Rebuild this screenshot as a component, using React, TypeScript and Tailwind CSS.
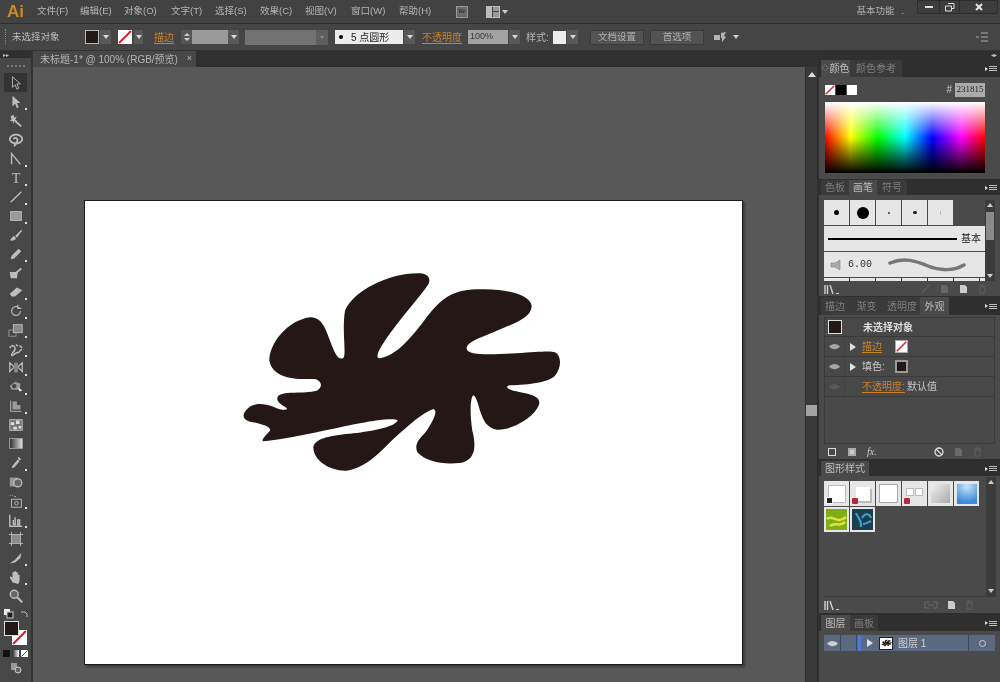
import React from "react";

const FONT = "font-['Liberation_Sans','Noto_Sans_CJK_SC',sans-serif]";

const BLOB = "M345 140C370 80 480 25 570 28C600 30 605 50 590 68C560 110 500 175 455 245C440 270 438 283 450 283C500 275 545 220 590 160C630 110 660 78 740 76C820 72 900 90 905 125C905 160 860 175 790 205C750 222 708 235 710 255C715 275 780 272 860 268C920 264 960 260 975 265C995 275 995 310 975 335C955 355 900 362 840 364C825 366 830 376 850 380C900 390 930 395 928 418C920 455 850 500 800 497C770 490 760 470 750 440C742 410 735 390 728 395C720 410 720 450 727 500C740 550 735 590 690 597C640 602 590 595 562 565C550 535 575 520 590 500C610 470 625 440 610 435C580 445 540 480 490 525C450 565 410 610 350 620C300 622 250 590 250 550C255 520 310 515 370 508C430 500 490 490 503 470C500 462 450 465 390 478C300 495 180 525 100 532C92 530 105 515 120 500C125 490 100 480 60 473C35 465 35 450 55 432C75 415 100 418 130 428C155 440 175 440 170 432C150 420 135 410 145 395C165 380 220 390 260 380C280 370 275 350 255 345C210 345 130 350 118 290C118 240 170 170 240 160C275 160 285 190 300 230C315 270 325 290 340 282C350 270 335 200 345 140Z";

const Ico = ({ children, w = 18, h = 18, vb = "0 0 18 18", cls = "" }: { children: React.ReactNode; w?: number; h?: number; vb?: string; cls?: string }) => (
  <svg width={w} height={h} viewBox={vb} className={`shrink-0 ${cls}`}>{children}</svg>
);

const Drop = ({ w = "w-[11px]", h = "h-[14px]" }: { w?: string; h?: string }) => (
  <div className={`${w} ${h} bg-[#585858] flex items-center justify-center shrink-0`}>
    <div className="w-0 h-0 border-l-[3px] border-r-[3px] border-t-[4px] border-l-transparent border-r-transparent border-t-[#d8d8d8]" />
  </div>
);

const NoneSwatch = ({ cls = "" }: { cls?: string }) => (
  <svg viewBox="0 0 14 14" className={cls}>
    <rect width="14" height="14" fill="#fff" />
    <line x1="1" y1="13" x2="13" y2="1" stroke="#d9202c" strokeWidth="2" />
  </svg>
);

const Tri = () => <div className="w-0 h-0 border-t-[4px] border-b-[4px] border-l-[6px] border-t-transparent border-b-transparent border-l-[#e0e0e0]" />;

const Menu = () => (
  <div className="w-[12px] h-[8px] flex items-center gap-[1px] shrink-0">
    <div className="w-0 h-0 border-t-[2px] border-b-[2px] border-l-[3px] border-t-transparent border-b-transparent border-l-[#ddd]" />
    <div className="flex flex-col gap-[1px] flex-1">
      <div className="h-px bg-[#bbb]" /><div className="h-px bg-[#bbb]" /><div className="h-px bg-[#bbb]" />
    </div>
  </div>
);

const menus: [string, string][] = [
  ["文件(F)", "w-[43px]"], ["编辑(E)", "w-[44px]"], ["对象(O)", "w-[47px]"], ["文字(T)", "w-[44px]"], ["选择(S)", "w-[45px]"],
  ["效果(C)", "w-[45px]"], ["视图(V)", "w-[46px]"], ["窗口(W)", "w-[48px]"], ["帮助(H)", "w-[42px]"],
];

const TitleBar = () => (
  <div className="h-[24px] bg-[#424242] flex items-center shrink-0 border-b border-[#2e2e2e]">
    <span className="ml-[7px] w-[30px] text-[17px] font-bold text-[#c98a24] leading-none">Ai</span>
    {menus.map(([t, w]) => (
      <span key={t} className={`${w} text-[9.5px] text-[#b5b5b5] whitespace-nowrap`}>{t}</span>
    ))}
    <div className="ml-[15px] w-[12px] h-[12px] bg-[#6a6a6a] border border-[#999] text-[6px] text-[#333] flex items-center justify-center font-bold">Br</div>
    <div className="ml-[18px] w-[14px] h-[12px] border border-[#bbb] flex">
      <div className="w-[5px] bg-[#bbb]" />
      <div className="flex-1 flex flex-col gap-px pl-px"><div className="flex-1 bg-[#999]" /><div className="flex-1 bg-[#999]" /></div>
    </div>
    <div className="ml-[2px] w-0 h-0 border-l-[3px] border-r-[3px] border-t-[4px] border-l-transparent border-r-transparent border-t-[#ccc]" />
    <div className="ml-auto flex items-center self-start h-full">
      <span className="text-[9.5px] text-[#b0b0b0] mr-[7px]">基本功能</span>
      <span className="text-[9px] text-[#ccc] mr-[13px]">.</span>
      <div className="flex self-start h-[14px] mr-[2px] bg-[#3d3d3d] border border-[#2c2c2c] rounded-b-[2px]">
        <div className="w-[22px] flex items-center justify-center border-r border-[#2c2c2c]"><div className="w-[8px] h-[2px] bg-[#ddd]" /></div>
        <div className="w-[20px] flex items-center justify-center border-r border-[#2c2c2c]">
          <Ico w={10} h={9} vb="0 0 10 9"><path d="M3 .5h6v5H7M.5 3h6v5h-6z" fill="none" stroke="#ddd" /></Ico>
        </div>
        <div className="w-[37px] flex items-center justify-center">
          <Ico w={8} h={8} vb="0 0 8 8"><path d="M1 1l6 6M7 1L1 7" stroke="#e5e5e5" strokeWidth="2" /></Ico>
        </div>
      </div>
    </div>
  </div>
);

const Btn = ({ t, ml }: { t: string; ml: string }) => (
  <div className={`${ml} w-[54px] h-[15px] bg-[#535353] border border-[#3a3a3a] text-[9.5px] text-[#b0b0b0] flex items-center justify-center`}>{t}</div>
);

const ControlBar = () => (
  <div className="h-[27px] bg-[#454545] flex items-center shrink-0 border-b border-[#333] text-[10px] text-[#b5b5b5]">
    <div className="ml-[5px] w-[2px] h-[16px] border-l border-dotted border-[#888]" />
    <span className="ml-[5px] w-[73px] text-[9.5px] text-[#bdbdbd]">未选择对象</span>
    <div className="w-[14px] h-[14px] bg-[#231815] border border-[#bbb]" />
    <div className="ml-[1px]"><Drop /></div>
    <NoneSwatch cls="ml-[7px] w-[14px] h-[14px]" />
    <div className="ml-[2px]"><Drop w="w-[9px]" /></div>
    <span className="ml-[11px] w-[27px] text-[#c7832b] underline underline-offset-2">描边</span>
    <div className="w-[11px] h-[14px] bg-[#555] flex flex-col items-center justify-center gap-[2px]">
      <div className="w-0 h-0 border-l-[3px] border-r-[3px] border-b-[3px] border-l-transparent border-r-transparent border-b-[#ccc]" />
      <div className="w-0 h-0 border-l-[3px] border-r-[3px] border-t-[3px] border-l-transparent border-r-transparent border-t-[#ccc]" />
    </div>
    <div className="w-[36px] h-[14px] bg-[#9a9a9a]" />
    <Drop />
    <div className="ml-[6px] w-[71px] h-[15px] bg-[#727272]" />
    <div className="w-[12px] h-[15px] bg-[#5e5e5e] flex items-center justify-center">
      <div className="w-0 h-0 border-l-[2px] border-r-[2px] border-t-[3px] border-l-transparent border-r-transparent border-t-[#888]" />
    </div>
    <div className="ml-[7px] w-[68px] h-[14px] bg-[#ececec] text-[#222] flex items-center pl-[4px]">
      <div className="w-[4px] h-[4px] rounded-full bg-black" />
      <span className="ml-[8px] text-[10px] whitespace-nowrap">5 点圆形</span>
    </div>
    <div className="ml-[1px]"><Drop /></div>
    <span className="ml-[7px] w-[46px] text-[#c7832b] underline underline-offset-2 whitespace-nowrap">不透明度</span>
    <div className="w-[40px] h-[14px] bg-[#a3a3a3] text-[9px] text-[#333] pl-[2px] flex items-center">100%</div>
    <div className="ml-[1px]"><Drop /></div>
    <span className="ml-[6px] w-[27px] whitespace-nowrap">样式:</span>
    <div className="w-[13px] h-[13px] bg-[#ededed]" />
    <div className="ml-[1px]"><Drop /></div>
    <Btn t="文档设置" ml="ml-[12px]" />
    <Btn t="首选项" ml="ml-[6px]" />
    <Ico w={14} h={14} vb="0 0 14 14" cls="ml-[9px]"><path d="M1 5h6v5H1zM8 3l5-1-2 4 2 1-4 5V8H8z" fill="#b5b5b5" /></Ico>
    <div className="ml-[6px] w-0 h-0 border-l-[3px] border-r-[3px] border-t-[4px] border-l-transparent border-r-transparent border-t-[#ccc]" />
    <div className="ml-auto mr-[12px]">
      <Ico w={12} h={10} vb="0 0 12 10"><path d="M5 1h7M5 5h7M5 9h7M0 5h3" stroke="#aaa" /></Ico>
    </div>
  </div>
);

const f = "#bdbdbd";
const tools: React.ReactNode[] = [
  <path d="M5 2v12l3-3 2 5 2-1-2-5h4z" fill="#333" stroke={f} />,
  <path d="M5 2v12l3-3 2 5 2-1-2-5h4z" fill={f} />,
  <g><path d="M8 9l7 6" stroke={f} strokeWidth="2" /><path d="M6 2l1 3 3-1-2 3 2 2-3 0-1 3-1-3H2l2-2-1-3z" fill={f} /></g>,
  <g><ellipse cx="9" cy="8" rx="7" ry="5" fill="none" stroke={f} strokeWidth="2" /><path d="M6 8c3-3 6 0 4 3l-3 5" fill="none" stroke={f} strokeWidth="2" /></g>,
  <path d="M4 15V3l10 12" fill="none" stroke={f} strokeWidth="1.5" />,
  <text x="9" y="15" textAnchor="middle" fontSize="16" fontFamily="Liberation Serif" fill={f}>T</text>,
  <path d="M3 15L15 3" stroke={f} strokeWidth="1.5" />,
  <rect x="3" y="4" width="12" height="10" fill="#999" stroke={f} />,
  <g><path d="M8 10l7-7 1 1-6 8z" fill={f} /><path d="M2 15c3 1 6 0 7-2l-2-3c-2 0-3 3-5 5z" fill={f} /></g>,
  <path d="M3 15l1-4 8-8 3 3-8 8z" fill={f} />,
  <g><path d="M2 8h9l-1 7H3z" fill={f} /><path d="M9 9l6-5" stroke={f} strokeWidth="2" /></g>,
  <path d="M2 11l8-7 6 3-8 7H4z" fill={f} />,
  <path d="M14 9a5 5 0 1 1-2-4M11 2v4h4" fill="none" stroke={f} strokeWidth="1.3" />,
  <g><rect x="1" y="9" width="8" height="7" fill="none" stroke="#999" /><rect x="6" y="3" width="10" height="9" fill="#8a8a8a" stroke={f} /></g>,
  <path d="M2 8c2-4 5-3 6 0s-5 6-4 8 5-4 7-3 2-4 5-3M9 4l2 2M13 5l3 3" fill="none" stroke={f} strokeWidth="1.6" />,
  <g><path d="M2 3l5 5-5 5zM16 3l-5 5 5 5z" fill="none" stroke={f} strokeWidth="1.4" /><path d="M7 3h4v11H7z" fill="#8a8a8a" /></g>,
  <g><path d="M2 8l6-5 6 2-1 7H4z" fill="#9a9a9a" /><circle cx="7" cy="8" r="2.5" fill="#444" /><path d="M11 9l5 4-3 1z" fill="#eee" /></g>,
  <g><path d="M3 3v12h12" fill="none" stroke={f} /><path d="M5 4h5v4h4v5H5z" fill="#9a9a9a" /></g>,
  <g><rect x="2" y="3" width="14" height="12" fill="#777" stroke={f} /><path d="M3 6h4v3H3zM9 4h4v4H9zM6 11h4v3H6zM12 10h3v3h-3z" fill="#ddd" /></g>,
  <defs />,
  <path d="M4 15l1-3 6-7 2 2-6 7zM11 4l1-2 3 3-2 1z" fill={f} />,
  <g><rect x="2" y="4" width="9" height="10" fill="#999" /><circle cx="11" cy="10" r="4.5" fill="#666" stroke={f} strokeWidth="1.5" /></g>,
  <g><rect x="4" y="7" width="11" height="9" fill="none" stroke={f} /><circle cx="9.5" cy="11.5" r="2" fill="none" stroke={f} /><path d="M2 3h1M5 2v1M7 4h2" stroke={f} /></g>,
  <path d="M2 3v13h14M6 14V9M6 14h2V6M11 14v-5h2v5z" fill="none" stroke={f} strokeWidth="1.6" />,
  <g><rect x="4" y="4" width="10" height="10" fill="#8a8a8a" /><path d="M4 1v16M14 1v16M1 4h16M1 14h16" stroke={f} /></g>,
  <path d="M2 15l6-4 7-8-1 6-6 5-5 1z" fill={f} />,
  <path d="M5 15c-1-2-3-5-3-6s2-1 3 1V4c0-1 2-1 2 0v3-4c0-1 2-1 2 0v4-3c0-1 2-1 2 0v5-2c0-1 2-1 2 0v5c0 3-1 4-2 5z" fill={f} />,
  <g><circle cx="7" cy="7" r="4.5" fill="#666" stroke={f} strokeWidth="1.6" /><path d="M10 10l6 6" stroke={f} strokeWidth="2.4" /></g>,
];

const flyout = new Set([1, 4, 5, 6, 7, 9, 11, 12, 13, 14, 15, 16, 17, 20, 22, 23, 25, 26]);

const Toolbar = () => (
  <div className="w-[33px] shrink-0 bg-[#474747] border-r-2 border-[#333] flex flex-col items-center">
    <div className="h-[7px] w-full bg-[#2f2f2f] text-[6px] text-[#bbb] leading-none pl-[3px] pt-[1px]">▸▸</div>
    <div className="mt-[7px] w-[18px] border-t-2 border-dotted border-[#777]" />
    <div className="mt-[6px]" />
    {tools.map((t, i) => (
      <div key={i} className={`relative w-[23px] h-[19px] shrink-0 flex items-center justify-center ${i === 0 ? "bg-[#333] rounded-[1px]" : ""}`}>
        {i === 19 ? (
          <div className="w-[14px] h-[11px] border border-[#999] bg-[linear-gradient(to_right,#333,#ddd)]" />
        ) : (
          <Ico w={16} h={16}>{t}</Ico>
        )}
        {flyout.has(i) && <div className="absolute right-[0px] bottom-[1px] w-[2px] h-[2px] bg-[#ddd]" />}
      </div>
    ))}
    <div className="mt-[4px] flex w-[24px] justify-between items-center">
      <Ico w={10} h={10} vb="0 0 10 10"><rect x="0" y="0" width="6" height="6" fill="#eee" /><rect x="3" y="3" width="6" height="6" fill="#222" stroke="#ccc" /></Ico>
      <Ico w={8} h={8} vb="0 0 8 8"><path d="M1 2h4l2 2v3" fill="none" stroke="#bbb" /></Ico>
    </div>
    <div className="relative mt-[2px] w-[24px] h-[24px]">
      <div className="absolute left-[8px] top-[9px] w-[15px] h-[15px]"><NoneSwatch cls="w-full h-full" /></div>
      <div className="absolute left-0 top-0 w-[15px] h-[15px] bg-[#231815] border border-[#ddd]" />
    </div>
    <div className="mt-[5px] flex gap-[2px]">
      <div className="w-[7px] h-[7px] bg-[#111]" />
      <div className="w-[7px] h-[7px] bg-[linear-gradient(to_right,#222,#fff)]" />
      <NoneSwatch cls="w-[7px] h-[7px]" />
    </div>
    <Ico w={12} h={12} vb="0 0 12 12" cls="mt-[5px]"><rect x="1" y="1" width="6" height="7" fill="#999" /><circle cx="8" cy="8" r="3" fill="#666" stroke="#ccc" /></Ico>
  </div>
);

const Blob = () => (
  <svg width="340" height="215" viewBox="0 0 1020 645" className="block">
    <path fill="#231815" d={BLOB} />
  </svg>
);

const Canvas = () => (
  <div className="flex-1 flex flex-col min-w-0">
    <div className="h-[16px] bg-[#303030] shrink-0 flex">
      <div className="w-[163px] bg-[#474747] flex items-center text-[10px] text-[#b5b5b5] pl-[7px] whitespace-nowrap">
        未标题-1* @ 100% (RGB/预览)
        <span className="ml-auto mr-[4px] text-[9px]">×</span>
      </div>
    </div>
    <div className="flex-1 flex min-h-0">
      <div className="flex-1 bg-[#585858] pl-[51px] pt-[133px]">
        <div className="w-[659px] h-[465px] bg-white border border-[#1c1c1c] shadow-[2px_2px_2px_rgba(0,0,0,0.35)] pl-[145px] pt-[63px]">
          <Blob />
        </div>
      </div>
      <div className="w-[13px] shrink-0 bg-[#3a3a3a] border-x border-[#2e2e2e] flex flex-col items-center pt-[5px]">
        <div className="w-0 h-0 border-l-[4px] border-r-[4px] border-b-[5px] border-l-transparent border-r-transparent border-b-[#ddd]" />
        <div className="mt-[328px] w-[11px] h-[11px] bg-[#a3a3a3]" />
      </div>
    </div>
  </div>
);

const Tabs = ({ items, active, h = "h-[17px]", dot }: { items: [string, string][]; active: string; h?: string; dot?: boolean }) => (
  <div className={`${h} bg-[#2f2f2f] flex items-stretch shrink-0 pl-[2px] pr-[3px] text-[10px]`}>
    {items.map(([t, w]) => (
      <div key={t} className={`${w} flex items-center justify-center whitespace-nowrap ${t === active ? "bg-[#4a4a4a] text-[#bdbdbd]" : "bg-[#3a3a3a] text-[#7e7e7e]"}`}>
        {dot && t === active && <span className="text-[7px] mr-[1px]">◇</span>}{t}
      </div>
    ))}
    <div className="ml-auto self-center"><Menu /></div>
  </div>
);

const Foot = ({ children, h = "h-[14px]" }: { children: React.ReactNode; h?: string }) => (
  <div className={`${h} shrink-0 flex items-center px-[5px]`}>{children}</div>
);

const LibIcon = () => (
  <div className="flex items-end">
    <Ico w={11} h={10} vb="0 0 11 10"><path d="M1 1v9M3.5 1v9M6 1l3 9" stroke="#d0d0d0" strokeWidth="1.4" /></Ico>
    <div className="w-[3px] h-px bg-[#ccc] ml-[1px]" />
  </div>
);
const Pg = ({ c = "#6a6a6a" }: { c?: string }) => (
  <Ico w={9} h={10} vb="0 0 9 10"><path d="M1 1h5l2 2v6H1z" fill={c} /></Ico>
);
const Bin = ({ c = "#5f5f5f" }: { c?: string }) => (
  <Ico w={9} h={10} vb="0 0 9 10"><path d="M1 2h7M2 3h5v6H2zM3 1h3" fill="none" stroke={c} /></Ico>
);

const Cell = ({ children }: { children?: React.ReactNode }) => (
  <div className="w-[25px] h-[25px] bg-[#e6e6e6] flex items-center justify-center shrink-0">{children}</div>
);

const VScroll = ({ thumb }: { thumb?: boolean }) => (
  <div className="w-[10px] bg-[#3b3b3b] flex flex-col items-center pt-[3px] pb-[3px] shrink-0">
    <div className="w-0 h-0 border-l-[3px] border-r-[3px] border-b-[4px] border-l-transparent border-r-transparent border-b-[#ccc]" />
    {thumb && <div className="mt-[5px] w-[8px] h-[28px] bg-[#8a8a8a]" />}
    <div className="mt-auto w-0 h-0 border-l-[3px] border-r-[3px] border-t-[4px] border-l-transparent border-r-transparent border-t-[#ccc]" />
  </div>
);

const ColorPanel = () => (
  <div className="h-[119px] flex flex-col shrink-0">
    <Tabs items={[["颜色", "w-[29px]"], ["颜色参考", "w-[52px]"]]} active="颜色" dot />
    <div className="flex-1 bg-[#4a4a4a] pl-[6px]">
      <div className="flex items-center h-[25px] w-[160px]">
        <NoneSwatch cls="w-[10px] h-[10px]" />
        <div className="ml-px w-[10px] h-[10px] bg-black" />
        <div className="ml-px w-[10px] h-[10px] bg-white" />
        <span className="ml-auto text-[10px] text-[#ccc] mr-[3px]">#</span>
        <div className="w-[30px] h-[14px] bg-[#ababab] text-[9px] text-[#222] flex items-center justify-center font-['Liberation_Serif',serif]">231815</div>
      </div>
      <div className="w-[160px] h-[71px] bg-[linear-gradient(to_bottom,#fff,rgba(255,255,255,0)_50%,rgba(0,0,0,0)_50%,#000),linear-gradient(to_right,#f00,#ff0_16%,#0f0_33%,#0ff_50%,#00f_67%,#f0f_85%,#f00)]" />
    </div>
  </div>
);

const BrushPanel = () => (
  <div className="h-[116px] flex flex-col shrink-0 mt-[1px]">
    <Tabs items={[["色板", "w-[28px]"], ["画笔", "w-[28px]"], ["符号", "w-[30px]"]]} active="画笔" h="h-[15px]" />
    <div className="flex-1 bg-[#4a4a4a] flex flex-col min-h-0">
      <div className="h-[81px] mt-[5px] ml-[5px] mr-[4px] flex shrink-0">
        <div className="w-[161px] flex flex-col gap-[1px] overflow-hidden">
          <div className="flex gap-[1px]">
            <Cell><div className="w-[5px] h-[5px] rounded-full bg-black" /></Cell>
            <Cell><div className="w-[12px] h-[12px] rounded-full bg-black" /></Cell>
            <Cell><div className="w-[2px] h-[2px] rounded-full bg-[#333]" /></Cell>
            <Cell><div className="w-[4px] h-[3px] rounded-full bg-[#222]" /></Cell>
            <Cell><div className="w-px h-[4px] bg-[#bbb]" /></Cell>
          </div>
          <div className="h-[25px] bg-[#e6e6e6] flex items-center pl-[4px] shrink-0">
            <div className="w-[129px] h-[2px] bg-black" />
            <span className="ml-[4px] text-[10px] text-[#222]">基本</span>
          </div>
          <div className="h-[25px] bg-[#e6e6e6] flex items-center pl-[6px] shrink-0">
            <Ico w={14} h={12} vb="0 0 14 12"><path d="M1 4h4l5-3v10L5 8H1z" fill="#aaa" stroke="#777" strokeWidth=".5" /></Ico>
            <span className="ml-[4px] w-[40px] text-[10px] text-[#333] font-['Liberation_Mono',monospace]">6.00</span>
            <Ico w={80} h={14} vb="0 0 80 14"><path d="M2 5c14-6 26-2 38 3s26 5 36-1" fill="none" stroke="#777" strokeWidth="3.5" strokeLinecap="round" /></Ico>
          </div>
          <div className="h-[3px] bg-[#e6e6e6] shrink-0 flex">
            {[0, 1, 2, 3, 4, 5].map((i) => <div key={i} className="w-[26px] h-[3px] border-r border-[#333]" />)}
          </div>
        </div>
        <VScroll thumb />
      </div>
      <Foot h="h-[15px]">
        <LibIcon />
        <div className="ml-auto flex items-center gap-[10px] mr-[8px]">
          <Ico w={9} h={10} vb="0 0 9 10"><path d="M1 9l7-8" stroke="#6a6a6a" /></Ico><Pg c="#666" /><Pg c="#ccc" /><Bin />
        </div>
      </Foot>
    </div>
  </div>
);

const Eye = ({ c = "#a5a5a5" }: { c?: string }) => (
  <Ico w={11} h={7} vb="0 0 11 7"><path d="M0 3.5C3 0 8 0 11 3.5 8 7 3 7 0 3.5z" fill={c} /></Ico>
);

const Row = ({ eye, tri, children, eyeC }: { eye?: boolean; tri?: boolean; children: React.ReactNode; eyeC?: string }) => (
  <div className="h-[20px] border-b border-[#3a3a3a] flex items-center shrink-0 text-[10px]">
    <div className="w-[20px] h-full flex items-center justify-center border-r border-[#414141]">{eye && <Eye c={eyeC} />}</div>
    <div className="w-[13px] flex justify-center pl-[2px]">{tri && <Tri />}</div>
    {children}
  </div>
);

const AppearancePanel = () => (
  <div className="h-[162px] flex flex-col shrink-0 mt-[1px]">
    <Tabs items={[["描边", "w-[28px]"], ["渐变", "w-[35px]"], ["透明度", "w-[36px]"], ["外观", "w-[29px]"]]} active="外观" h="h-[18px]" />
    <div className="flex-1 bg-[#4a4a4a] flex flex-col pl-[5px] pr-[5px] pt-[2px]">
      <div className="flex-1 border border-[#3a3a3a] bg-[#484848] flex flex-col">
        <div className="h-[19px] border-b border-[#3a3a3a] flex items-center shrink-0">
          <div className="ml-[3px] w-[14px] h-[14px] bg-[#231815] border border-[#ddd]" />
          <span className="ml-[21px] text-[10px] font-bold text-[#ddd]">未选择对象</span>
        </div>
        <Row eye tri>
          <span className="ml-[4px] w-[33px] text-[#c7832b] underline underline-offset-2">描边</span>
          <div className="w-[13px] h-[13px] border border-[#aaa]"><NoneSwatch cls="w-full h-full" /></div>
        </Row>
        <Row eye tri>
          <span className="ml-[4px] w-[33px] text-[#c8c8c8]">填色:</span>
          <div className="w-[13px] h-[13px] bg-[#231815] border-2 border-[#999]" />
        </Row>
        <Row eye eyeC="#5a5a5a">
          <span className="ml-[4px] w-[45px] text-[#c7832b] underline underline-offset-2 whitespace-nowrap">不透明度:</span>
          <span className="text-[#c8c8c8]">默认值</span>
        </Row>
      </div>
      <Foot h="h-[15px]">
        <div className="w-[8px] h-[8px] border border-[#ddd] ml-[-1px]" />
        <div className="ml-[12px] w-[8px] h-[8px] border-2 border-[#aaa] bg-[#ccc]" />
        <span className="ml-[11px] italic text-[10px] text-[#ccc] font-['Liberation_Serif',serif]">fx.</span>
        <div className="ml-auto flex items-center gap-[10px] mr-[8px]">
          <Ico w={10} h={10} vb="0 0 10 10"><circle cx="5" cy="5" r="4" fill="none" stroke="#ddd" strokeWidth="1.3" /><path d="M2 2l6 6" stroke="#ddd" strokeWidth="1.3" /></Ico>
          <Pg /><Bin />
        </div>
      </Foot>
    </div>
  </div>
);

const Thumb = ({ children }: { children?: React.ReactNode }) => (
  <div className="relative w-[25px] h-[25px] bg-[#e6e6e6] flex items-center justify-center shrink-0">{children}</div>
);
const Red = () => <div className="absolute left-[2px] bottom-[2px] w-[6px] h-[6px] bg-[#b8283a] rounded-[1px]" />;

const StylesPanel = () => (
  <div className="h-[152px] flex flex-col shrink-0 mt-[2px]">
    <Tabs items={[["图形样式", "w-[48px]"]]} active="图形样式" h="h-[15px]" />
    <div className="flex-1 bg-[#4a4a4a] flex flex-col min-h-0">
      <div className="flex-1 flex ml-[5px] mr-[4px] mt-[1px] border-b border-[#3a3a3a] min-h-0">
        <div className="flex-1 pt-[4px] flex flex-col gap-px">
          <div className="flex gap-px">
            <Thumb><div className="w-[18px] h-[18px] bg-white border border-[#bbb]" /><div className="absolute left-[2px] bottom-[2px] w-[7px] h-[7px] bg-[#222] border border-white" /></Thumb>
            <Thumb><div className="w-[14px] h-[14px] bg-white shadow-[2px_2px_0_#bbb]" /><Red /></Thumb>
            <Thumb><div className="w-[19px] h-[19px] bg-white border border-[#aaa]" /></Thumb>
            <Thumb><div className="flex gap-px mb-[3px]"><div className="w-[8px] h-[8px] bg-white border border-[#bbb]" /><div className="w-[8px] h-[8px] bg-white border border-[#bbb]" /></div><Red /></Thumb>
            <Thumb><div className="w-[19px] h-[19px] bg-[linear-gradient(135deg,#f0f0f0,#aaa)]" /></Thumb>
            <Thumb><div className="w-[20px] h-[20px] bg-[radial-gradient(circle_at_50%_10%,#c6e8fa,#3c8ad8_80%)]" /></Thumb>
          </div>
          <div className="flex gap-px">
            <Thumb>
              <Ico w={21} h={21} vb="0 0 21 21"><rect width="21" height="21" fill="#7fae1c" /><path d="M1 10c5-5 10 6 19-2M4 17c6-5 9 2 15-4" fill="none" stroke="#dfe23a" strokeWidth="2.5" /></Ico>
            </Thumb>
            <Thumb>
              <Ico w={21} h={21} vb="0 0 21 21"><rect width="21" height="21" fill="#1d3e4e" /><path d="M4 4c2 6 6 6 5 14M10 9c3-6 8-4 9 0M11 15c3 0 6-2 8-3" fill="none" stroke="#3aa2cf" strokeWidth="2" /></Ico>
            </Thumb>
          </div>
        </div>
        <VScroll />
      </div>
      <Foot h="h-[16px]">
        <LibIcon />
        <div className="ml-auto flex items-center gap-[9px] mr-[21px]">
          <Ico w={14} h={8} vb="0 0 14 8"><path d="M5 1H1v6h4M9 1h4v6H9M4 4h6" fill="none" stroke="#6a6a6a" /></Ico>
          <Pg c="#ccc" /><Bin />
        </div>
      </Foot>
    </div>
  </div>
);

const LayersPanel = () => (
  <div className="flex-1 flex flex-col mt-[2px] min-h-0">
    <Tabs items={[["图层", "w-[29px]"], ["画板", "w-[28px]"]]} active="图层" h="h-[16px]" />
    <div className="flex-1 bg-[#4a4a4a] pl-[5px] pr-[5px] pt-[4px]">
      <div className="h-[16px] bg-[#5a6880] flex items-center">
        <div className="w-[17px] h-full flex items-center justify-center border-r border-[#3f4757]"><Eye c="#cfcfcf" /></div>
        <div className="w-[16px] h-full border-r border-[#3f4757]" />
        <div className="w-[3px] h-full bg-[#4f78d8] ml-[1px]" />
        <div className="w-[15px] flex justify-center pl-[3px]"><Tri /></div>
        <div className="ml-[3px] w-[14px] h-[13px] bg-white flex items-center justify-center border border-[#222]">
          <Ico w={11} h={8} vb="0 0 1020 645"><path fill="#231815" d={BLOB} /></Ico>
        </div>
        <span className="ml-[5px] text-[10px] text-[#d0d0d0] whitespace-nowrap">图层 1</span>
        <div className="ml-auto w-[27px] h-full border-l border-[#3f4757] flex items-center justify-center">
          <div className="w-[7px] h-[7px] rounded-full border border-[#ccc]" />
        </div>
      </div>
    </div>
  </div>
);

const RightPanels = () => (
  <div className="w-[182px] shrink-0 bg-[#2f2f2f] flex flex-col min-h-0 pl-[1px]">
    <div className="h-[9px] shrink-0 text-[6px] text-[#bbb] text-right pr-[3px] leading-[9px]">◂▸</div>
    <ColorPanel />
    <BrushPanel />
    <AppearancePanel />
    <StylesPanel />
    <LayersPanel />
  </div>
);

export default function App() {
  return (
    <div className={`w-[1000px] h-[682px] overflow-hidden flex flex-col bg-[#454545] blur-[0.35px] ${FONT}`}>
      <TitleBar />
      <ControlBar />
      <div className="flex-1 flex min-h-0">
        <Toolbar />
        <Canvas />
        <RightPanels />
      </div>
    </div>
  );
}
